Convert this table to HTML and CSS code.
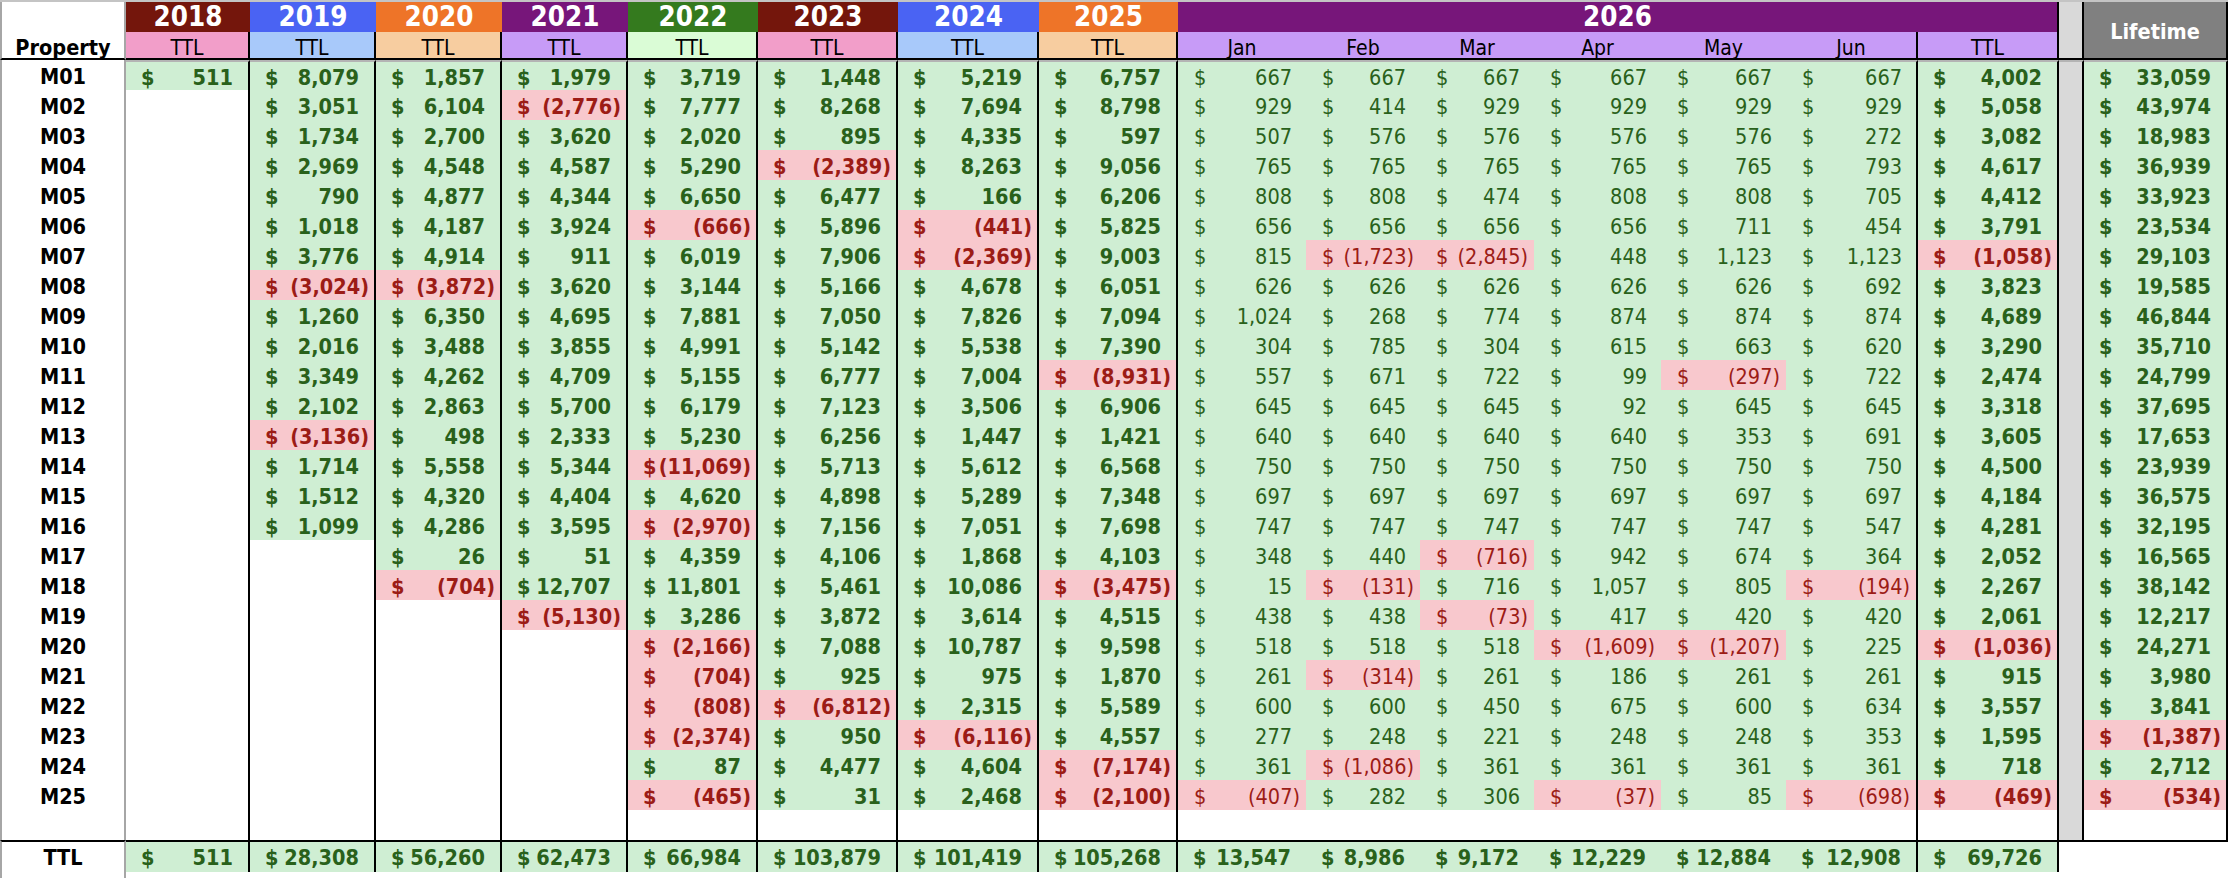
FILE: index.html
```html
<!DOCTYPE html>
<html lang="en">
<head>
<meta charset="utf-8">
<title>Property P&amp;L</title>
<link rel="stylesheet" href="styles.css">
</head>
<body>
<div class="sheet">
<div class="strip"></div>
<div class="head">
<div class="prop">Property</div>
<div class="yr c1">2018</div>
<div class="yr c2">2019</div>
<div class="yr c3">2020</div>
<div class="yr c4">2021</div>
<div class="yr c5">2022</div>
<div class="yr c1">2023</div>
<div class="yr c2">2024</div>
<div class="yr c3">2025</div>
<div class="yr c4 y26">2026</div>
<div class="gap"></div>
<div class="life">Lifetime</div>
<div class="sub t s1">TTL</div>
<div class="sub t s2">TTL</div>
<div class="sub t s3">TTL</div>
<div class="sub t s4">TTL</div>
<div class="sub t s5">TTL</div>
<div class="sub t s1">TTL</div>
<div class="sub t s2">TTL</div>
<div class="sub t s3">TTL</div>
<div class="sub s4">Jan</div>
<div class="sub s4">Feb</div>
<div class="sub s4">Mar</div>
<div class="sub s4">Apr</div>
<div class="sub s4">May</div>
<div class="sub t s4">Jun</div>
<div class="sub t s4">TTL</div>
</div>

<div class="row first"><div class="p">M01</div>
<div class="v g"><span>$</span><span>511</span></div>
<div class="v g"><span>$</span><span>8,079</span></div>
<div class="v g"><span>$</span><span>1,857</span></div>
<div class="v g"><span>$</span><span>1,979</span></div>
<div class="v g"><span>$</span><span>3,719</span></div>
<div class="v g"><span>$</span><span>1,448</span></div>
<div class="v g"><span>$</span><span>5,219</span></div>
<div class="v g"><span>$</span><span>6,757</span></div>
<div class="v m g"><span>$</span><span>667</span></div>
<div class="v m g"><span>$</span><span>667</span></div>
<div class="v m g"><span>$</span><span>667</span></div>
<div class="v m g"><span>$</span><span>667</span></div>
<div class="v m g"><span>$</span><span>667</span></div>
<div class="v m g"><span>$</span><span>667</span></div>
<div class="v g"><span>$</span><span>4,002</span></div>
<div></div>
<div class="v g"><span>$</span><span>33,059</span></div>
</div>

<div class="row"><div class="p">M02</div>
<div></div>
<div class="v g"><span>$</span><span>3,051</span></div>
<div class="v g"><span>$</span><span>6,104</span></div>
<div class="v r"><span>$</span><span>(2,776)</span></div>
<div class="v g"><span>$</span><span>7,777</span></div>
<div class="v g"><span>$</span><span>8,268</span></div>
<div class="v g"><span>$</span><span>7,694</span></div>
<div class="v g"><span>$</span><span>8,798</span></div>
<div class="v m g"><span>$</span><span>929</span></div>
<div class="v m g"><span>$</span><span>414</span></div>
<div class="v m g"><span>$</span><span>929</span></div>
<div class="v m g"><span>$</span><span>929</span></div>
<div class="v m g"><span>$</span><span>929</span></div>
<div class="v m g"><span>$</span><span>929</span></div>
<div class="v g"><span>$</span><span>5,058</span></div>
<div></div>
<div class="v g"><span>$</span><span>43,974</span></div>
</div>

<div class="row"><div class="p">M03</div>
<div></div>
<div class="v g"><span>$</span><span>1,734</span></div>
<div class="v g"><span>$</span><span>2,700</span></div>
<div class="v g"><span>$</span><span>3,620</span></div>
<div class="v g"><span>$</span><span>2,020</span></div>
<div class="v g"><span>$</span><span>895</span></div>
<div class="v g"><span>$</span><span>4,335</span></div>
<div class="v g"><span>$</span><span>597</span></div>
<div class="v m g"><span>$</span><span>507</span></div>
<div class="v m g"><span>$</span><span>576</span></div>
<div class="v m g"><span>$</span><span>576</span></div>
<div class="v m g"><span>$</span><span>576</span></div>
<div class="v m g"><span>$</span><span>576</span></div>
<div class="v m g"><span>$</span><span>272</span></div>
<div class="v g"><span>$</span><span>3,082</span></div>
<div></div>
<div class="v g"><span>$</span><span>18,983</span></div>
</div>

<div class="row"><div class="p">M04</div>
<div></div>
<div class="v g"><span>$</span><span>2,969</span></div>
<div class="v g"><span>$</span><span>4,548</span></div>
<div class="v g"><span>$</span><span>4,587</span></div>
<div class="v g"><span>$</span><span>5,290</span></div>
<div class="v r"><span>$</span><span>(2,389)</span></div>
<div class="v g"><span>$</span><span>8,263</span></div>
<div class="v g"><span>$</span><span>9,056</span></div>
<div class="v m g"><span>$</span><span>765</span></div>
<div class="v m g"><span>$</span><span>765</span></div>
<div class="v m g"><span>$</span><span>765</span></div>
<div class="v m g"><span>$</span><span>765</span></div>
<div class="v m g"><span>$</span><span>765</span></div>
<div class="v m g"><span>$</span><span>793</span></div>
<div class="v g"><span>$</span><span>4,617</span></div>
<div></div>
<div class="v g"><span>$</span><span>36,939</span></div>
</div>

<div class="row"><div class="p">M05</div>
<div></div>
<div class="v g"><span>$</span><span>790</span></div>
<div class="v g"><span>$</span><span>4,877</span></div>
<div class="v g"><span>$</span><span>4,344</span></div>
<div class="v g"><span>$</span><span>6,650</span></div>
<div class="v g"><span>$</span><span>6,477</span></div>
<div class="v g"><span>$</span><span>166</span></div>
<div class="v g"><span>$</span><span>6,206</span></div>
<div class="v m g"><span>$</span><span>808</span></div>
<div class="v m g"><span>$</span><span>808</span></div>
<div class="v m g"><span>$</span><span>474</span></div>
<div class="v m g"><span>$</span><span>808</span></div>
<div class="v m g"><span>$</span><span>808</span></div>
<div class="v m g"><span>$</span><span>705</span></div>
<div class="v g"><span>$</span><span>4,412</span></div>
<div></div>
<div class="v g"><span>$</span><span>33,923</span></div>
</div>

<div class="row"><div class="p">M06</div>
<div></div>
<div class="v g"><span>$</span><span>1,018</span></div>
<div class="v g"><span>$</span><span>4,187</span></div>
<div class="v g"><span>$</span><span>3,924</span></div>
<div class="v r"><span>$</span><span>(666)</span></div>
<div class="v g"><span>$</span><span>5,896</span></div>
<div class="v r"><span>$</span><span>(441)</span></div>
<div class="v g"><span>$</span><span>5,825</span></div>
<div class="v m g"><span>$</span><span>656</span></div>
<div class="v m g"><span>$</span><span>656</span></div>
<div class="v m g"><span>$</span><span>656</span></div>
<div class="v m g"><span>$</span><span>656</span></div>
<div class="v m g"><span>$</span><span>711</span></div>
<div class="v m g"><span>$</span><span>454</span></div>
<div class="v g"><span>$</span><span>3,791</span></div>
<div></div>
<div class="v g"><span>$</span><span>23,534</span></div>
</div>

<div class="row"><div class="p">M07</div>
<div></div>
<div class="v g"><span>$</span><span>3,776</span></div>
<div class="v g"><span>$</span><span>4,914</span></div>
<div class="v g"><span>$</span><span>911</span></div>
<div class="v g"><span>$</span><span>6,019</span></div>
<div class="v g"><span>$</span><span>7,906</span></div>
<div class="v r"><span>$</span><span>(2,369)</span></div>
<div class="v g"><span>$</span><span>9,003</span></div>
<div class="v m g"><span>$</span><span>815</span></div>
<div class="v m r"><span>$</span><span>(1,723)</span></div>
<div class="v m r"><span>$</span><span>(2,845)</span></div>
<div class="v m g"><span>$</span><span>448</span></div>
<div class="v m g"><span>$</span><span>1,123</span></div>
<div class="v m g"><span>$</span><span>1,123</span></div>
<div class="v r"><span>$</span><span>(1,058)</span></div>
<div></div>
<div class="v g"><span>$</span><span>29,103</span></div>
</div>

<div class="row"><div class="p">M08</div>
<div></div>
<div class="v r"><span>$</span><span>(3,024)</span></div>
<div class="v r"><span>$</span><span>(3,872)</span></div>
<div class="v g"><span>$</span><span>3,620</span></div>
<div class="v g"><span>$</span><span>3,144</span></div>
<div class="v g"><span>$</span><span>5,166</span></div>
<div class="v g"><span>$</span><span>4,678</span></div>
<div class="v g"><span>$</span><span>6,051</span></div>
<div class="v m g"><span>$</span><span>626</span></div>
<div class="v m g"><span>$</span><span>626</span></div>
<div class="v m g"><span>$</span><span>626</span></div>
<div class="v m g"><span>$</span><span>626</span></div>
<div class="v m g"><span>$</span><span>626</span></div>
<div class="v m g"><span>$</span><span>692</span></div>
<div class="v g"><span>$</span><span>3,823</span></div>
<div></div>
<div class="v g"><span>$</span><span>19,585</span></div>
</div>

<div class="row"><div class="p">M09</div>
<div></div>
<div class="v g"><span>$</span><span>1,260</span></div>
<div class="v g"><span>$</span><span>6,350</span></div>
<div class="v g"><span>$</span><span>4,695</span></div>
<div class="v g"><span>$</span><span>7,881</span></div>
<div class="v g"><span>$</span><span>7,050</span></div>
<div class="v g"><span>$</span><span>7,826</span></div>
<div class="v g"><span>$</span><span>7,094</span></div>
<div class="v m g"><span>$</span><span>1,024</span></div>
<div class="v m g"><span>$</span><span>268</span></div>
<div class="v m g"><span>$</span><span>774</span></div>
<div class="v m g"><span>$</span><span>874</span></div>
<div class="v m g"><span>$</span><span>874</span></div>
<div class="v m g"><span>$</span><span>874</span></div>
<div class="v g"><span>$</span><span>4,689</span></div>
<div></div>
<div class="v g"><span>$</span><span>46,844</span></div>
</div>

<div class="row"><div class="p">M10</div>
<div></div>
<div class="v g"><span>$</span><span>2,016</span></div>
<div class="v g"><span>$</span><span>3,488</span></div>
<div class="v g"><span>$</span><span>3,855</span></div>
<div class="v g"><span>$</span><span>4,991</span></div>
<div class="v g"><span>$</span><span>5,142</span></div>
<div class="v g"><span>$</span><span>5,538</span></div>
<div class="v g"><span>$</span><span>7,390</span></div>
<div class="v m g"><span>$</span><span>304</span></div>
<div class="v m g"><span>$</span><span>785</span></div>
<div class="v m g"><span>$</span><span>304</span></div>
<div class="v m g"><span>$</span><span>615</span></div>
<div class="v m g"><span>$</span><span>663</span></div>
<div class="v m g"><span>$</span><span>620</span></div>
<div class="v g"><span>$</span><span>3,290</span></div>
<div></div>
<div class="v g"><span>$</span><span>35,710</span></div>
</div>

<div class="row"><div class="p">M11</div>
<div></div>
<div class="v g"><span>$</span><span>3,349</span></div>
<div class="v g"><span>$</span><span>4,262</span></div>
<div class="v g"><span>$</span><span>4,709</span></div>
<div class="v g"><span>$</span><span>5,155</span></div>
<div class="v g"><span>$</span><span>6,777</span></div>
<div class="v g"><span>$</span><span>7,004</span></div>
<div class="v r"><span>$</span><span>(8,931)</span></div>
<div class="v m g"><span>$</span><span>557</span></div>
<div class="v m g"><span>$</span><span>671</span></div>
<div class="v m g"><span>$</span><span>722</span></div>
<div class="v m g"><span>$</span><span>99</span></div>
<div class="v m r"><span>$</span><span>(297)</span></div>
<div class="v m g"><span>$</span><span>722</span></div>
<div class="v g"><span>$</span><span>2,474</span></div>
<div></div>
<div class="v g"><span>$</span><span>24,799</span></div>
</div>

<div class="row"><div class="p">M12</div>
<div></div>
<div class="v g"><span>$</span><span>2,102</span></div>
<div class="v g"><span>$</span><span>2,863</span></div>
<div class="v g"><span>$</span><span>5,700</span></div>
<div class="v g"><span>$</span><span>6,179</span></div>
<div class="v g"><span>$</span><span>7,123</span></div>
<div class="v g"><span>$</span><span>3,506</span></div>
<div class="v g"><span>$</span><span>6,906</span></div>
<div class="v m g"><span>$</span><span>645</span></div>
<div class="v m g"><span>$</span><span>645</span></div>
<div class="v m g"><span>$</span><span>645</span></div>
<div class="v m g"><span>$</span><span>92</span></div>
<div class="v m g"><span>$</span><span>645</span></div>
<div class="v m g"><span>$</span><span>645</span></div>
<div class="v g"><span>$</span><span>3,318</span></div>
<div></div>
<div class="v g"><span>$</span><span>37,695</span></div>
</div>

<div class="row"><div class="p">M13</div>
<div></div>
<div class="v r"><span>$</span><span>(3,136)</span></div>
<div class="v g"><span>$</span><span>498</span></div>
<div class="v g"><span>$</span><span>2,333</span></div>
<div class="v g"><span>$</span><span>5,230</span></div>
<div class="v g"><span>$</span><span>6,256</span></div>
<div class="v g"><span>$</span><span>1,447</span></div>
<div class="v g"><span>$</span><span>1,421</span></div>
<div class="v m g"><span>$</span><span>640</span></div>
<div class="v m g"><span>$</span><span>640</span></div>
<div class="v m g"><span>$</span><span>640</span></div>
<div class="v m g"><span>$</span><span>640</span></div>
<div class="v m g"><span>$</span><span>353</span></div>
<div class="v m g"><span>$</span><span>691</span></div>
<div class="v g"><span>$</span><span>3,605</span></div>
<div></div>
<div class="v g"><span>$</span><span>17,653</span></div>
</div>

<div class="row"><div class="p">M14</div>
<div></div>
<div class="v g"><span>$</span><span>1,714</span></div>
<div class="v g"><span>$</span><span>5,558</span></div>
<div class="v g"><span>$</span><span>5,344</span></div>
<div class="v r"><span>$</span><span>(11,069)</span></div>
<div class="v g"><span>$</span><span>5,713</span></div>
<div class="v g"><span>$</span><span>5,612</span></div>
<div class="v g"><span>$</span><span>6,568</span></div>
<div class="v m g"><span>$</span><span>750</span></div>
<div class="v m g"><span>$</span><span>750</span></div>
<div class="v m g"><span>$</span><span>750</span></div>
<div class="v m g"><span>$</span><span>750</span></div>
<div class="v m g"><span>$</span><span>750</span></div>
<div class="v m g"><span>$</span><span>750</span></div>
<div class="v g"><span>$</span><span>4,500</span></div>
<div></div>
<div class="v g"><span>$</span><span>23,939</span></div>
</div>

<div class="row"><div class="p">M15</div>
<div></div>
<div class="v g"><span>$</span><span>1,512</span></div>
<div class="v g"><span>$</span><span>4,320</span></div>
<div class="v g"><span>$</span><span>4,404</span></div>
<div class="v g"><span>$</span><span>4,620</span></div>
<div class="v g"><span>$</span><span>4,898</span></div>
<div class="v g"><span>$</span><span>5,289</span></div>
<div class="v g"><span>$</span><span>7,348</span></div>
<div class="v m g"><span>$</span><span>697</span></div>
<div class="v m g"><span>$</span><span>697</span></div>
<div class="v m g"><span>$</span><span>697</span></div>
<div class="v m g"><span>$</span><span>697</span></div>
<div class="v m g"><span>$</span><span>697</span></div>
<div class="v m g"><span>$</span><span>697</span></div>
<div class="v g"><span>$</span><span>4,184</span></div>
<div></div>
<div class="v g"><span>$</span><span>36,575</span></div>
</div>

<div class="row"><div class="p">M16</div>
<div></div>
<div class="v g"><span>$</span><span>1,099</span></div>
<div class="v g"><span>$</span><span>4,286</span></div>
<div class="v g"><span>$</span><span>3,595</span></div>
<div class="v r"><span>$</span><span>(2,970)</span></div>
<div class="v g"><span>$</span><span>7,156</span></div>
<div class="v g"><span>$</span><span>7,051</span></div>
<div class="v g"><span>$</span><span>7,698</span></div>
<div class="v m g"><span>$</span><span>747</span></div>
<div class="v m g"><span>$</span><span>747</span></div>
<div class="v m g"><span>$</span><span>747</span></div>
<div class="v m g"><span>$</span><span>747</span></div>
<div class="v m g"><span>$</span><span>747</span></div>
<div class="v m g"><span>$</span><span>547</span></div>
<div class="v g"><span>$</span><span>4,281</span></div>
<div></div>
<div class="v g"><span>$</span><span>32,195</span></div>
</div>

<div class="row"><div class="p">M17</div>
<div></div>
<div></div>
<div class="v g"><span>$</span><span>26</span></div>
<div class="v g"><span>$</span><span>51</span></div>
<div class="v g"><span>$</span><span>4,359</span></div>
<div class="v g"><span>$</span><span>4,106</span></div>
<div class="v g"><span>$</span><span>1,868</span></div>
<div class="v g"><span>$</span><span>4,103</span></div>
<div class="v m g"><span>$</span><span>348</span></div>
<div class="v m g"><span>$</span><span>440</span></div>
<div class="v m r"><span>$</span><span>(716)</span></div>
<div class="v m g"><span>$</span><span>942</span></div>
<div class="v m g"><span>$</span><span>674</span></div>
<div class="v m g"><span>$</span><span>364</span></div>
<div class="v g"><span>$</span><span>2,052</span></div>
<div></div>
<div class="v g"><span>$</span><span>16,565</span></div>
</div>

<div class="row"><div class="p">M18</div>
<div></div>
<div></div>
<div class="v r"><span>$</span><span>(704)</span></div>
<div class="v g"><span>$</span><span>12,707</span></div>
<div class="v g"><span>$</span><span>11,801</span></div>
<div class="v g"><span>$</span><span>5,461</span></div>
<div class="v g"><span>$</span><span>10,086</span></div>
<div class="v r"><span>$</span><span>(3,475)</span></div>
<div class="v m g"><span>$</span><span>15</span></div>
<div class="v m r"><span>$</span><span>(131)</span></div>
<div class="v m g"><span>$</span><span>716</span></div>
<div class="v m g"><span>$</span><span>1,057</span></div>
<div class="v m g"><span>$</span><span>805</span></div>
<div class="v m r"><span>$</span><span>(194)</span></div>
<div class="v g"><span>$</span><span>2,267</span></div>
<div></div>
<div class="v g"><span>$</span><span>38,142</span></div>
</div>

<div class="row"><div class="p">M19</div>
<div></div>
<div></div>
<div></div>
<div class="v r"><span>$</span><span>(5,130)</span></div>
<div class="v g"><span>$</span><span>3,286</span></div>
<div class="v g"><span>$</span><span>3,872</span></div>
<div class="v g"><span>$</span><span>3,614</span></div>
<div class="v g"><span>$</span><span>4,515</span></div>
<div class="v m g"><span>$</span><span>438</span></div>
<div class="v m g"><span>$</span><span>438</span></div>
<div class="v m r"><span>$</span><span>(73)</span></div>
<div class="v m g"><span>$</span><span>417</span></div>
<div class="v m g"><span>$</span><span>420</span></div>
<div class="v m g"><span>$</span><span>420</span></div>
<div class="v g"><span>$</span><span>2,061</span></div>
<div></div>
<div class="v g"><span>$</span><span>12,217</span></div>
</div>

<div class="row"><div class="p">M20</div>
<div></div>
<div></div>
<div></div>
<div></div>
<div class="v r"><span>$</span><span>(2,166)</span></div>
<div class="v g"><span>$</span><span>7,088</span></div>
<div class="v g"><span>$</span><span>10,787</span></div>
<div class="v g"><span>$</span><span>9,598</span></div>
<div class="v m g"><span>$</span><span>518</span></div>
<div class="v m g"><span>$</span><span>518</span></div>
<div class="v m g"><span>$</span><span>518</span></div>
<div class="v m r"><span>$</span><span>(1,609)</span></div>
<div class="v m r"><span>$</span><span>(1,207)</span></div>
<div class="v m g"><span>$</span><span>225</span></div>
<div class="v r"><span>$</span><span>(1,036)</span></div>
<div></div>
<div class="v g"><span>$</span><span>24,271</span></div>
</div>

<div class="row"><div class="p">M21</div>
<div></div>
<div></div>
<div></div>
<div></div>
<div class="v r"><span>$</span><span>(704)</span></div>
<div class="v g"><span>$</span><span>925</span></div>
<div class="v g"><span>$</span><span>975</span></div>
<div class="v g"><span>$</span><span>1,870</span></div>
<div class="v m g"><span>$</span><span>261</span></div>
<div class="v m r"><span>$</span><span>(314)</span></div>
<div class="v m g"><span>$</span><span>261</span></div>
<div class="v m g"><span>$</span><span>186</span></div>
<div class="v m g"><span>$</span><span>261</span></div>
<div class="v m g"><span>$</span><span>261</span></div>
<div class="v g"><span>$</span><span>915</span></div>
<div></div>
<div class="v g"><span>$</span><span>3,980</span></div>
</div>

<div class="row"><div class="p">M22</div>
<div></div>
<div></div>
<div></div>
<div></div>
<div class="v r"><span>$</span><span>(808)</span></div>
<div class="v r"><span>$</span><span>(6,812)</span></div>
<div class="v g"><span>$</span><span>2,315</span></div>
<div class="v g"><span>$</span><span>5,589</span></div>
<div class="v m g"><span>$</span><span>600</span></div>
<div class="v m g"><span>$</span><span>600</span></div>
<div class="v m g"><span>$</span><span>450</span></div>
<div class="v m g"><span>$</span><span>675</span></div>
<div class="v m g"><span>$</span><span>600</span></div>
<div class="v m g"><span>$</span><span>634</span></div>
<div class="v g"><span>$</span><span>3,557</span></div>
<div></div>
<div class="v g"><span>$</span><span>3,841</span></div>
</div>

<div class="row"><div class="p">M23</div>
<div></div>
<div></div>
<div></div>
<div></div>
<div class="v r"><span>$</span><span>(2,374)</span></div>
<div class="v g"><span>$</span><span>950</span></div>
<div class="v r"><span>$</span><span>(6,116)</span></div>
<div class="v g"><span>$</span><span>4,557</span></div>
<div class="v m g"><span>$</span><span>277</span></div>
<div class="v m g"><span>$</span><span>248</span></div>
<div class="v m g"><span>$</span><span>221</span></div>
<div class="v m g"><span>$</span><span>248</span></div>
<div class="v m g"><span>$</span><span>248</span></div>
<div class="v m g"><span>$</span><span>353</span></div>
<div class="v g"><span>$</span><span>1,595</span></div>
<div></div>
<div class="v r"><span>$</span><span>(1,387)</span></div>
</div>

<div class="row"><div class="p">M24</div>
<div></div>
<div></div>
<div></div>
<div></div>
<div class="v g"><span>$</span><span>87</span></div>
<div class="v g"><span>$</span><span>4,477</span></div>
<div class="v g"><span>$</span><span>4,604</span></div>
<div class="v r"><span>$</span><span>(7,174)</span></div>
<div class="v m g"><span>$</span><span>361</span></div>
<div class="v m r"><span>$</span><span>(1,086)</span></div>
<div class="v m g"><span>$</span><span>361</span></div>
<div class="v m g"><span>$</span><span>361</span></div>
<div class="v m g"><span>$</span><span>361</span></div>
<div class="v m g"><span>$</span><span>361</span></div>
<div class="v g"><span>$</span><span>718</span></div>
<div></div>
<div class="v g"><span>$</span><span>2,712</span></div>
</div>

<div class="row"><div class="p">M25</div>
<div></div>
<div></div>
<div></div>
<div></div>
<div class="v r"><span>$</span><span>(465)</span></div>
<div class="v g"><span>$</span><span>31</span></div>
<div class="v g"><span>$</span><span>2,468</span></div>
<div class="v r"><span>$</span><span>(2,100)</span></div>
<div class="v m r"><span>$</span><span>(407)</span></div>
<div class="v m g"><span>$</span><span>282</span></div>
<div class="v m g"><span>$</span><span>306</span></div>
<div class="v m r"><span>$</span><span>(37)</span></div>
<div class="v m g"><span>$</span><span>85</span></div>
<div class="v m r"><span>$</span><span>(698)</span></div>
<div class="v r"><span>$</span><span>(469)</span></div>
<div></div>
<div class="v r"><span>$</span><span>(534)</span></div>
</div>

<div class="row">
<div></div><div></div><div></div><div></div><div></div><div></div><div></div><div></div><div></div>
<div></div><div></div><div></div><div></div><div></div><div></div><div></div><div></div><div></div>
</div>

<div class="row ttl"><div class="p">TTL</div>
<div class="v g"><span>$</span><span>511</span></div>
<div class="v g"><span>$</span><span>28,308</span></div>
<div class="v g"><span>$</span><span>56,260</span></div>
<div class="v g"><span>$</span><span>62,473</span></div>
<div class="v g"><span>$</span><span>66,984</span></div>
<div class="v g"><span>$</span><span>103,879</span></div>
<div class="v g"><span>$</span><span>101,419</span></div>
<div class="v g"><span>$</span><span>105,268</span></div>
<div class="v g"><span>$</span><span>13,547</span></div>
<div class="v g"><span>$</span><span>8,986</span></div>
<div class="v g"><span>$</span><span>9,172</span></div>
<div class="v g"><span>$</span><span>12,229</span></div>
<div class="v g"><span>$</span><span>12,884</span></div>
<div class="v g"><span>$</span><span>12,908</span></div>
<div class="v g"><span>$</span><span>69,726</span></div>
<div></div>
<div></div>
</div>
<div class="end"></div>
</div>
</body>
</html>
```

FILE: styles.css
```css
:root {
  --cols: 126px 124px 126px 126px 126px 130px 140px 141px 139px 128px 114px 114px 127px 125px 132px 141px 25px 144px;
  --grid: #a6a6a6;
  --good-bg: #cfeed3;
  --good-fg: #29611b;
  --bad-bg: #f8c8cd;
  --bad-fg: #9c1c16;
}

* { box-sizing: border-box; }

html, body {
  margin: 0;
  padding: 0;
  background: #fff;
}

body {
  width: 2228px;
  height: 878px;
  overflow: hidden;
  font-family: "DejaVu Sans Condensed", "DejaVu Sans", sans-serif;
  font-stretch: condensed;
  font-size: 21.5px;
  color: #000;
}

.sheet { width: 2228px; }

.strip {
  height: 2px;
  background: #c4c4c4;
}

/* ---------- header ---------- */
.head {
  display: grid;
  grid-template-columns: var(--cols);
  grid-template-rows: 30px 28px;
}

.prop {
  grid-row: span 2;
  border-left: 2px solid var(--grid);
  border-right: 2px solid var(--grid);
  border-bottom: 2px solid #000;
  display: flex;
  justify-content: center;
  align-items: center;
  padding-top: 34px;
  font-weight: bold;
}

.yr {
  display: flex;
  align-items: center;
  justify-content: center;
  color: #fff;
  font-weight: bold;
  font-size: 27.5px;
  padding-bottom: 3px;
}

.y26 {
  grid-column: span 7;
  border-right: 2px solid #000;
}

.gap {
  grid-row: span 2;
  background: #d9d9d9;
  border-right: 2px solid #000;
  border-bottom: 2px solid #000;
}

.life {
  grid-row: span 2;
  background: #808080;
  color: #fff;
  font-weight: bold;
  display: flex;
  align-items: center;
  justify-content: center;
  padding-top: 2px;
  border-right: 2px solid #000;
  border-bottom: 2px solid #000;
}

.sub {
  display: flex;
  align-items: center;
  justify-content: center;
  border-bottom: 2px solid #000;
  font-size: 21px;
  padding-top: 5px;
}

.sub.t { border-right: 2px solid #000; }

.c1 { background: #74160c; }
.c2 { background: #4a63f3; }
.c3 { background: #ee7428; }
.c4 { background: #77167a; }
.c5 { background: #347a1e; }

.s1 { background: #f29ec9; }
.s2 { background: #a8c9fa; }
.s3 { background: #f7cda0; }
.s4 { background: #c79bf7; }
.s5 { background: #dafcd6; }

/* ---------- body rows ---------- */
.row {
  display: grid;
  grid-template-columns: var(--cols);
  height: 30px;
}

.row > :first-child {
  border-left: 2px solid var(--grid);
  border-right: 2px solid var(--grid);
}

.row > :nth-child(n+2):nth-child(-n+9),
.row > :nth-child(n+15) {
  border-right: 2px solid #000;
}

.row > :nth-child(17) { background: #d9d9d9; }

.row.first > :nth-child(n+2) { border-top: 2px solid #b4b4b4; }

.row.ttl { height: 32px; }
.row.ttl > * { border-top: 2px solid #000; }
.row.ttl > :nth-child(n+17) {
  border-right: 0;
  background: #fff;
}

.p {
  display: flex;
  align-items: center;
  justify-content: center;
  font-weight: bold;
  padding-top: 3px;
}

.ttl .p { padding-top: 1px; }

.v {
  display: flex;
  align-items: center;
  justify-content: space-between;
  padding: 3px 5px 0 15px;
  font-weight: bold;
  white-space: nowrap;
}

.ttl .v { padding-top: 1px; }

.v.m {
  font-weight: normal;
  padding-left: 16px;
  padding-right: 6px;
}

.g { background: var(--good-bg); color: var(--good-fg); }
.r { background: var(--bad-bg); color: var(--bad-fg); }

.v.g > :last-child { padding-right: 10px; }
.v.m.g > :last-child { padding-right: 8px; }

.end {
  height: 6px;
  width: 126px;
  border-left: 2px solid var(--grid);
  border-right: 2px solid var(--grid);
}
```
